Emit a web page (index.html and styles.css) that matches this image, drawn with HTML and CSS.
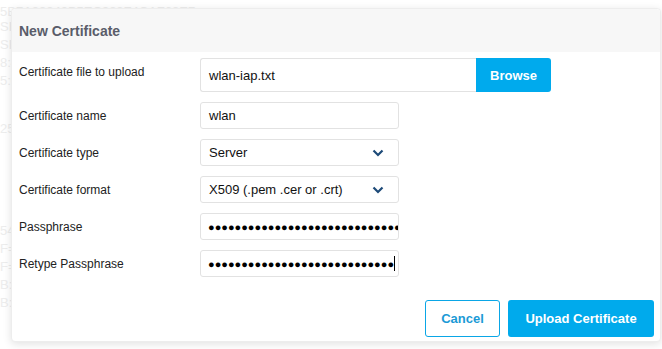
FILE: index.html
```
<!DOCTYPE html>
<html lang="en">
<head>
    <meta charset="UTF-8">
    <title>New Certificate</title>
    <link rel="stylesheet" href="styles.css">
</head>
<body>
    <div class="backdrop">
        <p class="bg-line bg-first">5B7A88843B5EC988F4CAF68E7</p>
        <p class="bg-line">SH</p>
        <p class="bg-line">SH</p>
        <p class="bg-line">8:4</p>
        <p class="bg-line">5:0</p>
        <p class="bg-line bg-gap">25</p>
        <p class="bg-line bg-gap2">54</p>
        <p class="bg-line">F=</p>
        <p class="bg-line">F=</p>
        <p class="bg-line">B:4</p>
        <p class="bg-line">B:4</p>
    </div>

    <div class="modal">
        <div class="modal-header">New Certificate</div>
        <div class="modal-body">
            <div class="row row-file">
                <label class="label label-file">Certificate file to upload</label>
                <div class="file-group">
                    <div class="file-name">wlan-iap.txt</div>
                    <button class="browse">Browse</button>
                </div>
            </div>
            <div class="row">
                <label class="label">Certificate name</label>
                <div class="field">wlan</div>
            </div>
            <div class="row">
                <label class="label">Certificate type</label>
                <div class="field select">
                    <span>Server</span>
                    <svg class="chevron" width="12" height="8" viewBox="0 0 12 8"><path d="M1.5 1.5 L6 6 L10.5 1.5" fill="none" stroke="#1d4a78" stroke-width="2.2"/></svg>
                </div>
            </div>
            <div class="row">
                <label class="label">Certificate format</label>
                <div class="field select">
                    <span>X509 (.pem .cer or .crt)</span>
                    <svg class="chevron" width="12" height="8" viewBox="0 0 12 8"><path d="M1.5 1.5 L6 6 L10.5 1.5" fill="none" stroke="#1d4a78" stroke-width="2.2"/></svg>
                </div>
            </div>
            <div class="row">
                <label class="label">Passphrase</label>
                <div class="field dots">&#9679;&#9679;&#9679;&#9679;&#9679;&#9679;&#9679;&#9679;&#9679;&#9679;&#9679;&#9679;&#9679;&#9679;&#9679;&#9679;&#9679;&#9679;&#9679;&#9679;&#9679;&#9679;&#9679;&#9679;&#9679;&#9679;&#9679;&#9679;&#9679;&#9679;&#9679;&#9679;</div>
            </div>
            <div class="row">
                <label class="label">Retype Passphrase</label>
                <div class="field dots"><span>&#9679;&#9679;&#9679;&#9679;&#9679;&#9679;&#9679;&#9679;&#9679;&#9679;&#9679;&#9679;&#9679;&#9679;&#9679;&#9679;&#9679;&#9679;&#9679;&#9679;&#9679;&#9679;&#9679;&#9679;&#9679;&#9679;&#9679;&#9679;</span><span class="caret"></span></div>
            </div>
        </div>
        <div class="modal-footer">
            <button class="btn btn-cancel">Cancel</button>
            <button class="btn btn-primary">Upload Certificate</button>
        </div>
    </div>
</body>
</html>
```

FILE: styles.css
```
body {
    margin: 0;
    padding: 0;
    font-family: "Liberation Sans", Arial, sans-serif;
    background: #fff;
    width: 662px;
    height: 349px;
    overflow: hidden;
    position: relative;
}

.backdrop {
    padding: 3px 0 0 0;
    color: #ededed;
    font-size: 13px;
}

.bg-line {
    margin: 0;
    height: 18px;
    line-height: 18px;
}

.bg-first {
    height: 15px;
}

.bg-gap {
    margin-top: 30px;
}

.bg-gap2 {
    margin-top: 84px;
}

.modal {
    position: absolute;
    left: 11px;
    top: 8px;
    width: 650px;
    height: 334px;
    background: #fff;
    border: 1px solid #ededed;
    border-radius: 4px;
    box-shadow: 0 2px 8px rgba(0, 0, 0, 0.12);
    display: flex;
    flex-direction: column;
    box-sizing: border-box;
}

.modal-header {
    height: 43px;
    background: #f7f7f7;
    border-radius: 4px 4px 0 0;
    padding-left: 7px;
    display: flex;
    align-items: center;
    font-size: 14px;
    font-weight: bold;
    color: #5a5d6a;
}

.modal-body {
    padding: 6px 0 0 7px;
    display: flex;
    flex-direction: column;
    gap: 10px;
}

.row {
    display: flex;
    align-items: center;
    height: 27px;
    font-size: 12px;
    color: #222;
}

.row-file {
    height: 34px;
}

.label {
    width: 181px;
}

.label-file {
    padding-bottom: 7px;
}

.file-group {
    display: flex;
    height: 34px;
}

.file-name {
    width: 276px;
    box-sizing: border-box;
    border: 1px solid #e2e2e2;
    border-right: none;
    border-radius: 3px 0 0 3px;
    display: flex;
    align-items: center;
    padding-left: 8px;
    font-size: 13px;
    color: #111;
}

.browse {
    width: 75px;
    border: none;
    background: #00aaed;
    color: #fff;
    font-family: inherit;
    font-size: 13px;
    font-weight: bold;
    border-radius: 0 3px 3px 0;
}

.field {
    width: 199px;
    height: 27px;
    box-sizing: border-box;
    border: 1px solid #e2e2e2;
    border-radius: 3px;
    display: flex;
    align-items: center;
    padding-left: 8px;
    font-size: 13px;
    color: #111;
    overflow: hidden;
    white-space: nowrap;
}

.select {
    justify-content: space-between;
    padding-right: 14px;
}

.chevron {
    display: block;
}

.dots {
    font-size: 11px;
    color: #000;
    padding-left: 7px;
}

.caret {
    display: inline-block;
    width: 1px;
    height: 15px;
    background: #000;
    margin-left: 0;
}

.modal-footer {
    margin-top: auto;
    display: flex;
    justify-content: flex-end;
    gap: 8px;
    padding: 0 6px 4px 0;
}

.btn {
    height: 37px;
    border-radius: 3px;
    font-family: inherit;
    font-size: 13px;
    font-weight: bold;
    cursor: pointer;
}

.btn-cancel {
    width: 75px;
    background: #fff;
    border: 1px solid #0aa6e6;
    color: #1b9ad6;
}

.btn-primary {
    width: 146px;
    background: #00aaec;
    border: none;
    color: #fff;
}
```
